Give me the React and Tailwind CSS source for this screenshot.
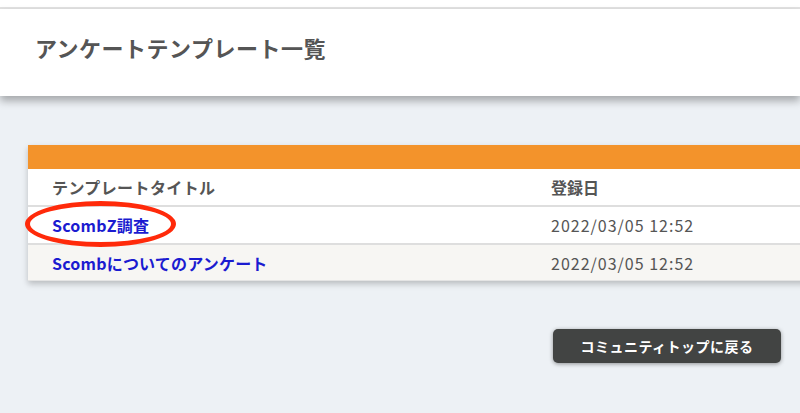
export default function App() {
  const rows = [
    { title: "ScombZ調査", date: "2022/03/05 12:52", circled: true },
    { title: "Scombについてのアンケート", date: "2022/03/05 12:52" },
  ];

  return (
    <div
      className="w-[800px] h-[413px] overflow-hidden bg-[#edf1f5] text-[#555]"
      style={{ fontFamily: '"Noto Sans CJK JP", "Noto Sans", sans-serif' }}
    >
      <div className="h-[9px] bg-white border-b-2 border-[#e2e2e2]" />
      <div className="h-[87px] bg-white flex items-center pl-[35px] shadow-[0_5px_8px_rgba(0,0,0,0.3)] relative">
        <h1 className="text-[22px] font-bold tracking-[0.5px] text-[#555] -mt-[10px]">
          アンケートテンプレート一覧
        </h1>
      </div>

      <div className="pt-[49px] pl-[28px]">
        <div className="w-[790px] bg-white shadow-[0_3px_6px_rgba(0,0,0,0.22)]">
          <div className="h-[24px] bg-[#f3932b]" />
          <div className="h-[38px] flex items-center text-[16px] font-bold border-b-2 border-[#dedede]">
            <div className="w-[523px] pl-[24px] tracking-[0.4px]">テンプレートタイトル</div>
            <div>登録日</div>
          </div>
          {rows.map((row, i) => (
            <div
              key={i}
              className={
                i % 2 === 0
                  ? "h-[38px] flex items-center text-[16px] border-b-2 border-[#dedede] bg-white relative"
                  : "h-[36px] flex items-center text-[16px] border-b border-[#e4e4e4] bg-[#f7f6f3]"
              }
            >
              <div className="w-[523px] pl-[24px]">
                <a href="#" className="font-bold text-[#1b1bd0] tracking-[0.2px]">
                  {row.title}
                </a>
              </div>
              <div className="text-[#555] tracking-[1px]">{row.date}</div>
              {row.circled && (
                <div className="absolute left-[-3px] top-[-6px] w-[151px] h-[46px] rounded-[50%] border-[5px] border-[#ff2a0a]" />
              )}
            </div>
          ))}
        </div>
      </div>

      <div className="flex justify-end pr-[19px] pt-[48px]">
        <button className="w-[228px] h-[34px] rounded-[5px] bg-[#424443] text-white text-[14px] font-bold tracking-[0.5px] shadow-[0_1px_4px_rgba(0,0,0,0.4)]">
          コミュニティトップに戻る
        </button>
      </div>
    </div>
  );
}
